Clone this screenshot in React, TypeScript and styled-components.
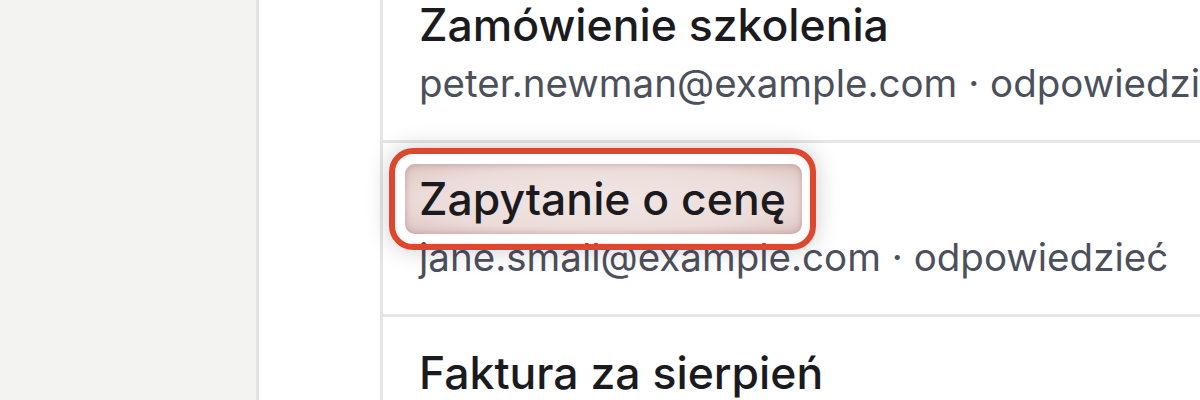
import React from 'react';
import styled, { createGlobalStyle } from 'styled-components';

const GlobalStyle = createGlobalStyle`
  html, body {
    margin: 0;
    padding: 0;
    background: #ffffff;
  }
  body {
    font-family: Inter, "Noto Sans", "Liberation Sans", sans-serif;
  }
`;

const Page = styled.div`
  display: flex;
  width: 1200px;
  height: 400px;
  overflow: hidden;
  background: #ffffff;
`;

const Sidebar = styled.div`
  width: 256px;
  flex-shrink: 0;
  background: #f3f3f2;
  border-right: 3px solid #e2e2e1;
`;

const Gutter = styled.div`
  width: 121px;
  flex-shrink: 0;
  background: #ffffff;
  border-right: 3px solid #e4e4e3;
`;

const List = styled.div`
  flex: 1;
  display: flex;
  flex-direction: column;
  margin-top: -31px;
  min-width: 0;
`;

const Row = styled.div`
  box-sizing: border-box;
  height: 174px;
  flex-shrink: 0;
  padding: 30px 0 0 36px;
  border-bottom: 3px solid #e6e6e5;
  white-space: nowrap;
`;

const Title = styled.div`
  font-size: 44.5px;
  line-height: 52px;
  font-weight: 500;
  color: #1b1b1f;
`;

const Meta = styled.div`
  margin-top: 9px;
  font-size: 38.5px;
  line-height: 46px;
  font-weight: 400;
  color: #4c505c;
`;

const Highlight = styled.span`
  position: relative;
  display: inline-block;
  padding: 9px 16px 9px 14px;
  margin: -9px -16px -9px -14px;
  border-radius: 10px;
  background: radial-gradient(ellipse at center, #f1e6e4 0%, #ebdcd9 65%, #dcc3bf 100%);
  box-shadow: inset 0 0 7px rgba(150, 90, 80, 0.4);

  &::after {
    content: '';
    position: absolute;
    top: -16px;
    bottom: -16px;
    left: -16px;
    right: -14px;
    border: 6px solid #dc472d;
    border-radius: 24px;
    box-shadow: 0 0 24px rgba(0, 0, 0, 0.2), inset 0 0 4px rgba(0, 0, 0, 0.08);
    pointer-events: none;
  }
`;

const messages = [
  { title: 'Zamówienie szkolenia', from: 'peter.newman@example.com', marked: false },
  { title: 'Zapytanie o cenę', from: 'jane.small@example.com', marked: true },
  { title: 'Faktura za sierpień', from: 'accounts@example.com', marked: false },
];

export default function App() {
  return (
    <>
      <GlobalStyle />
      <Page>
        <Sidebar />
        <Gutter />
        <List>
          {messages.map((m) => (
            <Row key={m.title}>
              <Title>{m.marked ? <Highlight>{m.title}</Highlight> : m.title}</Title>
              <Meta>{m.from} · odpowiedzieć</Meta>
            </Row>
          ))}
        </List>
      </Page>
    </>
  );
}
